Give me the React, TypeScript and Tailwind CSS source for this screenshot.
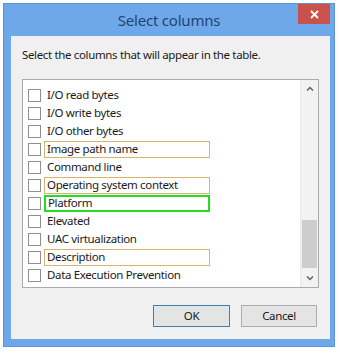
import React from "react";

const rows: { label: string; hl?: "tan" | "green" }[] = [
  { label: "I/O read bytes" },
  { label: "I/O write bytes" },
  { label: "I/O other bytes" },
  { label: "Image path name", hl: "tan" },
  { label: "Command line" },
  { label: "Operating system context", hl: "tan" },
  { label: "Platform", hl: "green" },
  { label: "Elevated" },
  { label: "UAC virtualization" },
  { label: "Description", hl: "tan" },
  { label: "Data Execution Prevention" },
];

export default function App() {
  return (
    <div
      className="w-[340px] h-[353px] bg-white pt-[3px] pl-[3px]"
      style={{ fontFamily: '"Noto Sans", "Open Sans", sans-serif' }}
    >
      <div className="w-[332px] h-[344px] bg-[#6ea8eb] flex flex-col border border-[#5b95d8]">
        <div className="h-[32px] relative flex items-center justify-center shrink-0">
          <span className="text-[15px] text-[#24446f] leading-none mt-[1px] tracking-[-0.2px]">Select columns</span>
          <div className="absolute top-0 right-[4px] w-[32px] h-[20px] bg-[#c9524c] flex items-center justify-center">
            <svg width="9" height="9" viewBox="0 0 9 9">
              <path d="M1 1 L8 8 M8 1 L1 8" stroke="white" strokeWidth="1.8" />
            </svg>
          </div>
        </div>
        <div className="ml-[7px] mr-[4px] mb-[7px] flex-1 bg-[#f0f0f0] flex flex-col pl-[11px] text-[11.5px] tracking-[-0.35px] text-[#1a1a1a]">
          <div className="pt-[11px] h-[43px] leading-[16px]">
            Select the columns that will appear in the table.
          </div>
          <div className="w-[297px] h-[209px] border border-[#a9abb0] bg-white flex">
            <div className="flex-1 pt-[6px] pl-[5px] flex flex-col">
              {rows.map((r) => (
                <div key={r.label} className="h-[18px] flex items-center">
                  <div className="w-[13px] h-[13px] border border-[#8e8f8f] bg-white shrink-0" />
                  <div
                    className={
                      "ml-[3px] w-[166px] h-[17px] flex items-center pl-[2px] whitespace-nowrap " +
                      (r.hl === "green"
                        ? "border-2 border-[#22dd22] pl-[1px]"
                        : r.hl === "tan"
                        ? "border border-[#dcb36c]"
                        : "border border-transparent")
                    }
                  >
                    {r.label}
                  </div>
                </div>
              ))}
            </div>
            <div className="w-[18px] bg-[#f2f2f2] border-l border-[#e8e8e8] flex flex-col items-center">
              <div className="h-[17px] w-full flex items-center justify-center">
                <svg width="8" height="5" viewBox="0 0 8 5">
                  <path d="M1 4.5 L4 1.5 L7 4.5" stroke="#606060" strokeWidth="1.5" fill="none" />
                </svg>
              </div>
              <div className="flex-1 w-full flex flex-col items-center">
                <div className="mt-[123px] w-[15px] h-[48px] bg-[#cdcdcd]" />
              </div>
              <div className="h-[17px] w-full flex items-center justify-center">
                <svg width="8" height="5" viewBox="0 0 8 5">
                  <path d="M1 0.5 L4 3.5 L7 0.5" stroke="#606060" strokeWidth="1.5" fill="none" />
                </svg>
              </div>
            </div>
          </div>
          <div className="mt-[17px] flex pl-[131px] gap-[11px]">
            <div className="w-[77px] h-[22px] border border-[#3c7fb1] bg-[#e4e4e4] flex items-center justify-center">
              OK
            </div>
            <div className="w-[76px] h-[22px] border border-[#adadad] bg-[#e4e4e4] flex items-center justify-center">
              Cancel
            </div>
          </div>
        </div>
      </div>
    </div>
  );
}
